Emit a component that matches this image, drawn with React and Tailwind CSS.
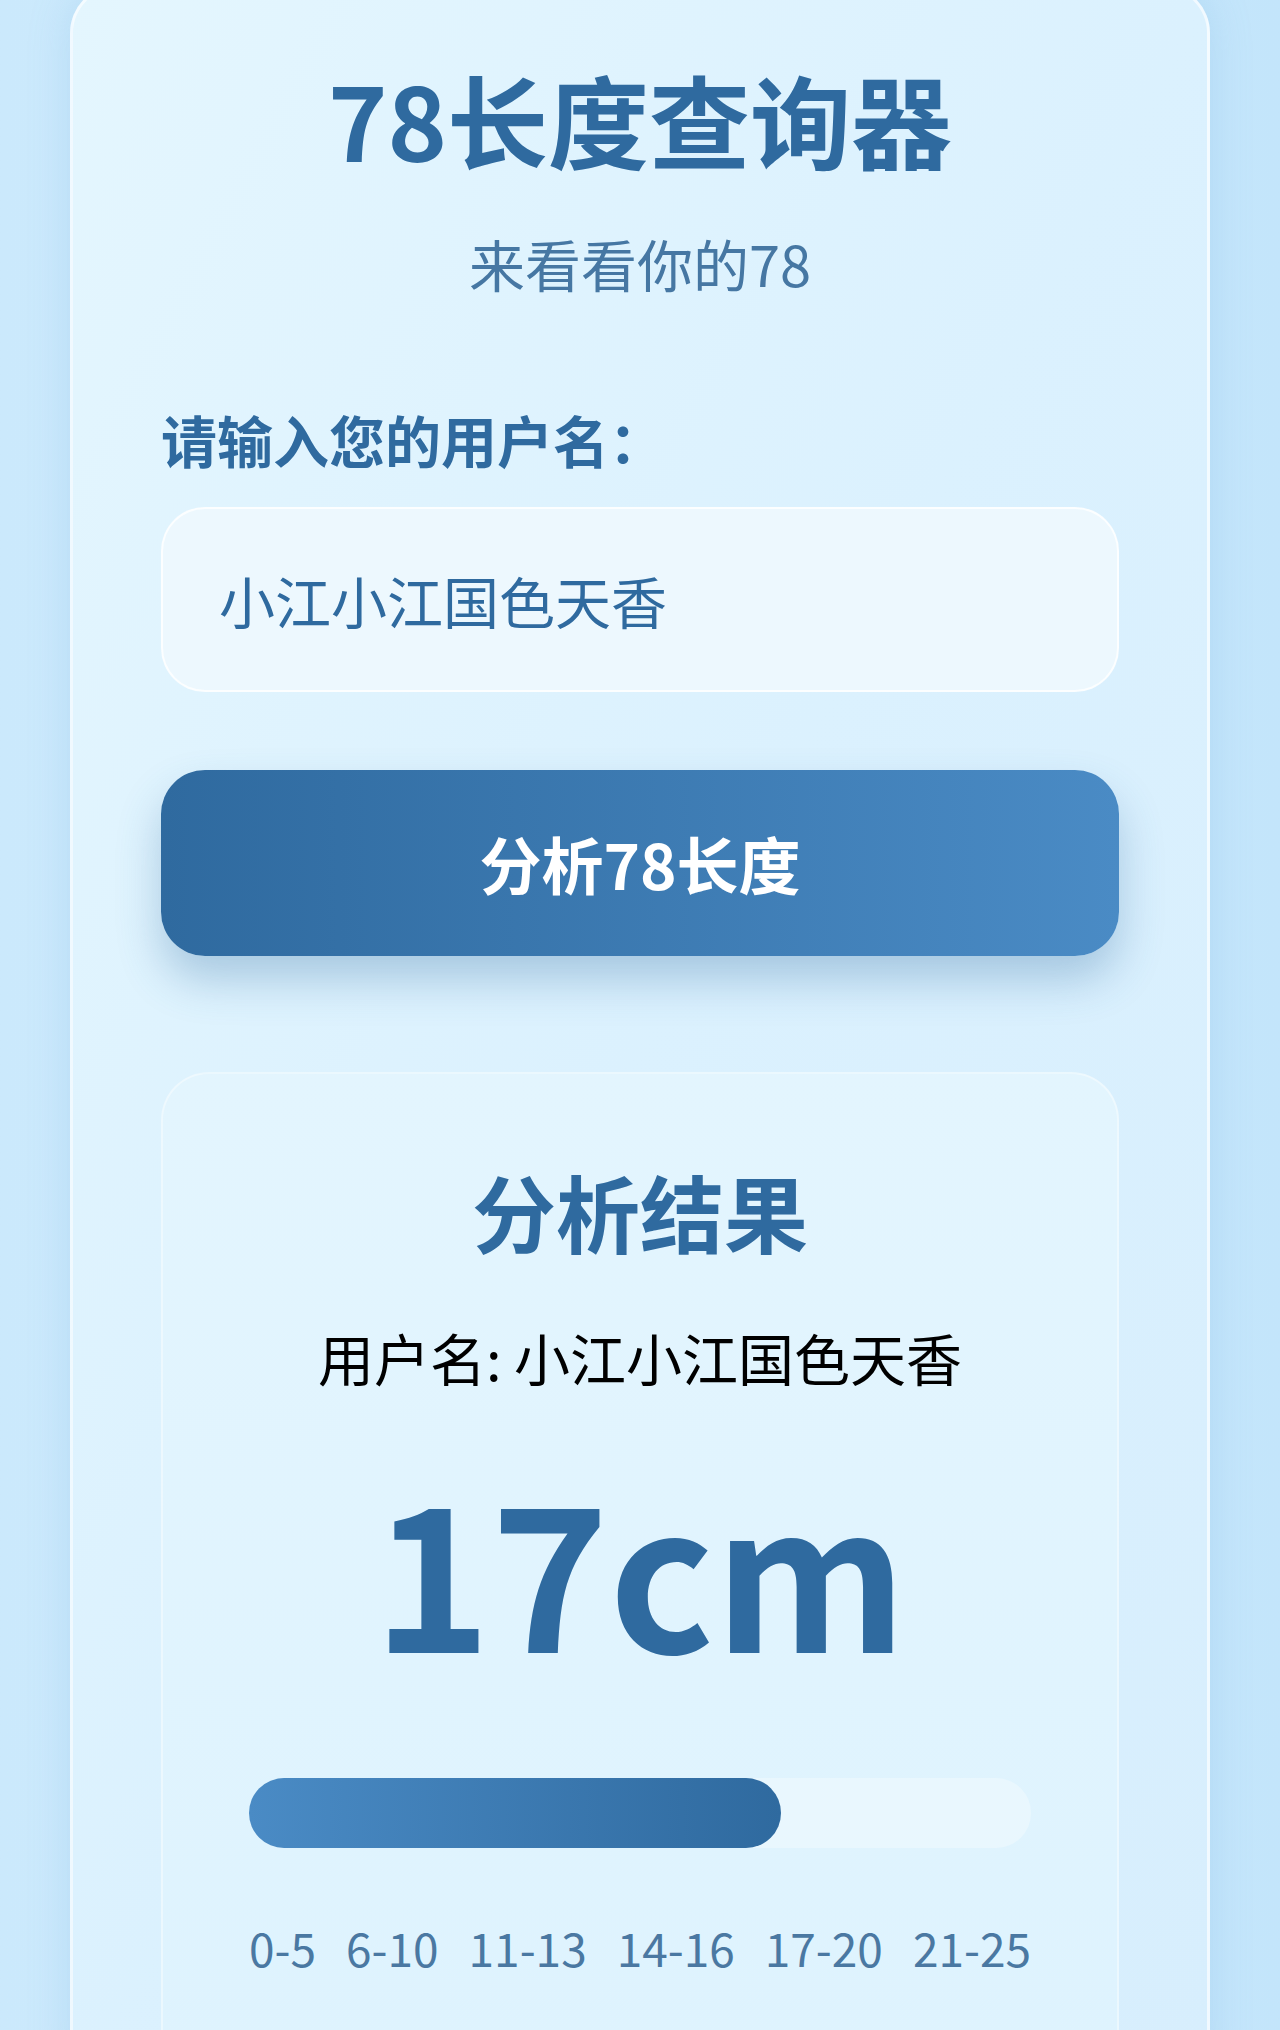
import React, { useState } from 'react';

const RANGES = ['0-5', '6-10', '11-13', '14-16', '17-20', '21-25'];
const MAX_LENGTH = 25;

const ResultPanel = ({ name, length }) => {
  const percent = Math.min(100, (length / MAX_LENGTH) * 100);

  return (
    <div className="mt-[116px] rounded-[48px] border-2 border-white/40 bg-linear-to-b from-[#e3f5fe] to-[#def3fe] px-[86px] pt-[95px] pb-[120px] text-center">
      <h2 className="text-[84px] font-bold leading-none text-[#2f6a9f]">分析结果</h2>
      <p className="mt-[76px] text-[56px] leading-none text-black">用户名: {name}</p>
      <div className="mt-[81px] text-[200px] font-bold leading-none text-[#2f6a9f]">{length}cm</div>

      {/* Progress bar */}
      <div className="mt-[112px] h-[70px] w-full rounded-full bg-[#e9f7fe]">
        <div
          className="h-full rounded-full bg-linear-to-r from-[#4a8bc5] to-[#2f6a9f]"
          style={{ width: `${percent}%` }}
        />
      </div>

      <div className="mt-[76px] flex justify-between text-[46px] leading-none text-[#4a78a2]">
        {RANGES.map((range) => (
          <span key={range}>{range}</span>
        ))}
      </div>
    </div>
  );
};

const App = () => {
  const [username, setUsername] = useState('小江小江国色天香');

  return (
    <div className="h-[2030px] overflow-hidden bg-linear-to-r from-[#cbe9fc] via-[#d2edfd] to-[#c3e5fb] font-['Noto_Sans_CJK_SC',sans-serif]">
      <div className="ml-[70px] -mt-[15px] w-[1140px] rounded-[48px] border-[3px] border-white/60 bg-linear-to-br from-[#e4f6fe] via-[#dbf1fe] to-[#d7eefd] px-[88px] pt-[80px] shadow-[0_0_40px_rgba(110,175,225,0.25)]">
        {/* Header */}
        <h1 className="text-center text-[101px] font-bold leading-none text-[#2f6a9f]">78长度查询器</h1>
        <p className="mt-[66px] text-center text-[56px] leading-none text-[#4677a3]">来看看你的78</p>

        {/* Form */}
        <label className="mt-[120px] block text-[56px] font-semibold leading-none text-[#2f6a9f]">
          请输入您的用户名：
        </label>
        <input
          type="text"
          value={username}
          onChange={(e) => setUsername(e.target.value)}
          className="mt-[40px] block h-[185px] w-full rounded-[44px] border-2 border-white/80 bg-[#eef8fe]/90 pl-[56px] text-[56px] leading-none text-[#2f6a9f] outline-none"
        />
        <button className="mt-[78px] flex h-[186px] w-full items-center justify-center rounded-[44px] bg-linear-to-r from-[#2f6a9f] to-[#4a8bc5] text-[62px] font-bold leading-none text-white shadow-[0_24px_44px_rgba(47,106,159,0.3)]">
          分析78长度
        </button>

        <ResultPanel name={username} length={17} />
      </div>
    </div>
  );
};

export default App;
